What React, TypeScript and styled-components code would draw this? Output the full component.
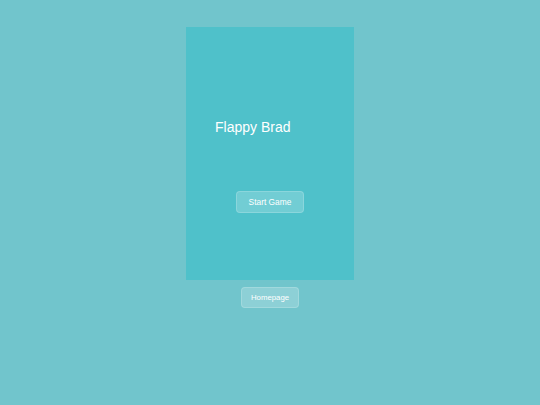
import React, { useState } from 'react';
import styled, { createGlobalStyle } from 'styled-components';

const GlobalStyle = createGlobalStyle`
  html, body {
    margin: 0;
    padding: 0;
    background-color: #71c5cc;
    font-family: 'Liberation Sans', Arial, sans-serif;
  }
`;

const App = () => {
  const [started, setStarted] = useState<boolean>(false);

  return (
    <>
      <GlobalStyle />
      <St.Page>
        <St.GameBox>
          <St.Title>Flappy Brad</St.Title>
          <St.Button type="button" $w={68} $h={22} $size={8.4} onClick={() => setStarted(!started)}>
            Start Game
          </St.Button>
        </St.GameBox>
        <St.Button type="button" $w={58} $h={21} $size={7.8} $top={7}>
          Homepage
        </St.Button>
      </St.Page>
    </>
  );
};

export default App;

const St = {
  Page: styled.div`
    display: flex;
    flex-direction: column;
    align-items: center;
    width: 540px;
    height: 405px;
    padding-top: 27px;
    box-sizing: border-box;
  `,
  GameBox: styled.div`
    display: flex;
    flex-direction: column;
    align-items: center;
    width: 168px;
    height: 253px;
    padding-top: 92px;
    box-sizing: border-box;
    background-color: #4fc1ca;
  `,
  Title: styled.h1`
    align-self: flex-start;
    margin: 0 0 0 29px;
    font-size: 14px;
    line-height: 16px;
    font-weight: 400;
    color: #ffffff;
  `,
  Button: styled.button<{ $w: number; $h: number; $size: number; $top?: number }>`
    display: flex;
    align-items: center;
    justify-content: center;
    width: ${(p) => p.$w}px;
    height: ${(p) => p.$h}px;
    margin-top: ${(p) => p.$top ?? 56}px;
    padding: 0;
    font-family: 'Liberation Sans', Arial, sans-serif;
    font-size: ${(p) => p.$size}px;
    color: #ffffff;
    background-color: rgba(255, 255, 255, 0.2);
    border: 1px solid rgba(255, 255, 255, 0.18);
    border-radius: 4px;
    cursor: pointer;
  `,
};
